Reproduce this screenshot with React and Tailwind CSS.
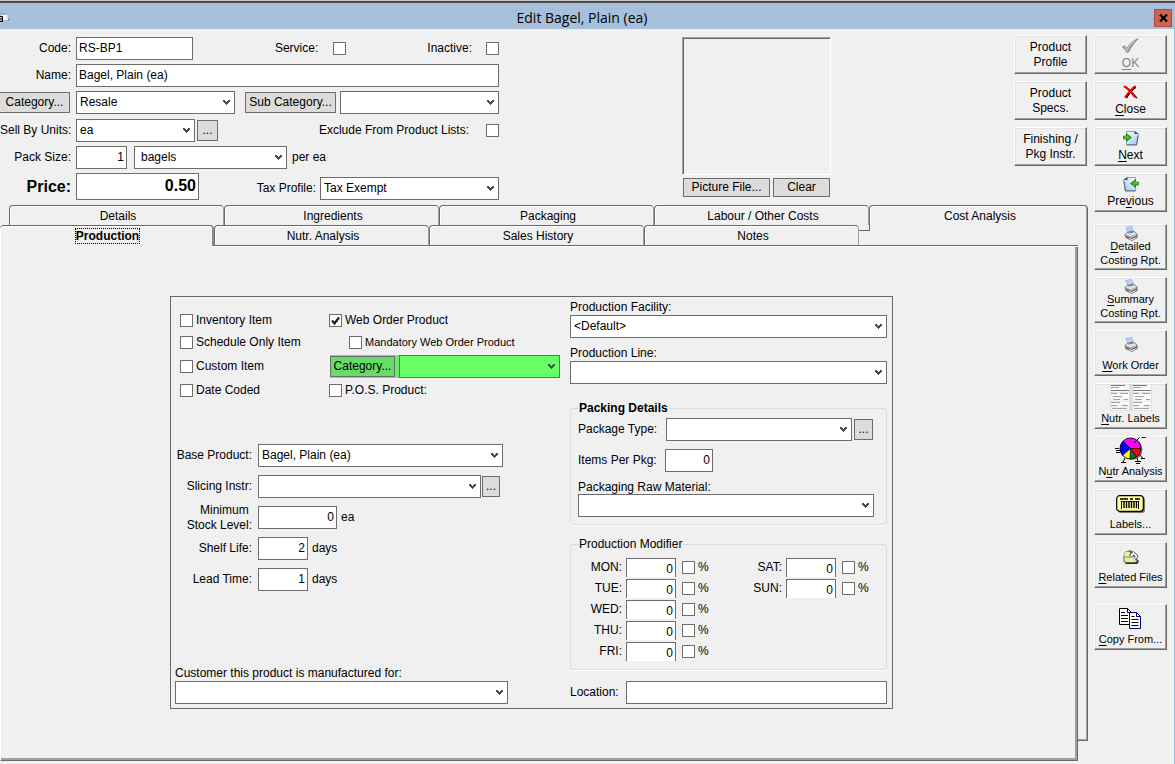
import { useState } from "react";
import { clsx } from "clsx";

const DAYS_LEFT = ["MON", "TUE", "WED", "THU", "FRI"];
const DAYS_RIGHT = ["SAT", "SUN"];

const BACK_TABS = [
	"Details",
	"Ingredients",
	"Packaging",
	"Labour / Other Costs",
];
const FRONT_TABS = ["Nutr. Analysis", "Sales History", "Notes"];

const TextField = ({ className, ...props }) => (
	<input
		type="text"
		className={clsx(
			"border border-[#6d6d6d] bg-white outline-none",
			className,
		)}
		{...props}
	/>
);

const SelectField = ({ className, selectClass, value = "", ...props }) => (
	<div className={clsx("relative h-[23px]", className)}>
		<select
			className={clsx(
				"block h-full w-full appearance-none border border-[#6d6d6d] pr-4 outline-none",
				selectClass || "bg-white pl-[3px]",
			)}
			defaultValue={value}
			{...props}
		>
			<option>{value}</option>
		</select>
		<svg
			className="pointer-events-none absolute top-[9px] right-1 h-[6px] w-2"
			viewBox="0 0 8 6"
		>
			<path
				d="M0 0h2v1h1v1h1V1h1V0h2v2H6v1H5v1H4v1H3V4H2V3H1V2H0z"
				fill="#4c4c4c"
			/>
		</svg>
	</div>
);

const CheckBox = ({ defaultChecked, ...props }) => (
	<span className="relative block size-[13px] shrink-0">
		<input
			type="checkbox"
			defaultChecked={defaultChecked}
			className="peer block size-[13px] appearance-none border border-[#6d6d6d] bg-white"
			{...props}
		/>
		<svg
			className="pointer-events-none absolute inset-0 hidden size-[13px] peer-checked:block"
			viewBox="0 0 13 13"
		>
			<path
				d="M3 6.5l2.5 3L10 3.5"
				fill="none"
				stroke="#1c1c1c"
				strokeWidth="2.2"
			/>
		</svg>
	</span>
);

const CheckRow = ({ label, className, checked }) => (
	<label className={clsx("flex items-center gap-[3px]", className)}>
		<CheckBox defaultChecked={checked} />
		{label}
	</label>
);

const FlatButton = ({ className, ...props }) => (
	<button
		type="button"
		className={clsx(
			"shrink-0 border border-[#6d6d6d] text-center whitespace-nowrap",
			className,
		)}
		{...props}
	/>
);

const RaisedButton = ({ className, ...props }) => (
	<button
		type="button"
		className={clsx(
			"flex w-[73px] shrink-0 flex-col items-center border border-t-white border-r-[#696969] border-b-[#696969] border-l-white bg-[#f0f0f0] shadow-[inset_-1px_-1px_0_#a0a0a0,inset_1px_1px_0_#e3e3e3]",
			className,
		)}
		{...props}
	/>
);

// "&" marks the underlined access key
const Mnemonic = ({ text }) => {
	const at = text.indexOf("&");
	if (at < 0) return text;
	return (
		<>
			{text.slice(0, at)}
			<span className="underline underline-offset-2">{text[at + 1]}</span>
			{text.slice(at + 2)}
		</>
	);
};

const CheckIcon = () => (
	<svg className="h-4 w-[17px]" viewBox="0 0 17 16">
		<path
			d="M1 8.500c1.500-1 3 0 3.800 2.200C7.500 6 11 2.500 16 .8 12.500 4.500 9 9 7 13.500c-.8 1.200-2 1.200-2.700.2C3.300 11.500 2.300 10 .8 9.800z"
			fill="#a2a2a2"
			stroke="#7a7a7a"
			strokeWidth=".7"
		/>
		<path
			d="M2 9.300c1.300-.3 2 1 3 3C7.500 7 10 4.500 13 2.800"
			fill="none"
			stroke="#d2d2d2"
			strokeWidth=".9"
		/>
	</svg>
);

const CrossIcon = () => (
	<svg className="h-[14px] w-[15px]" viewBox="0 0 15 14">
		<path
			d="M1.500 1.500C6 4.500 10 8.500 13 13M12 2C8.500 4.500 5 8.500 2.500 13"
			fill="none"
			stroke="#000"
			strokeWidth="1.400"
			transform="translate(.8 .2)"
		/>
		<path
			d="M1 1.200C5.500 4 9 8 12 12.200M12.500 1C8 4 5 8 2 12.500"
			fill="none"
			stroke="#f00"
			strokeWidth="2.100"
		/>
	</svg>
);

const PageIcon = ({ flip }) => (
	<svg className="h-4 w-4" viewBox="0 0 16 16">
		<defs>
			<linearGradient id={flip ? "pageB" : "pageA"} x1="0" y1="0" x2="1" y2="1">
				<stop offset="0" stopColor="#ffffff" />
				<stop offset="1" stopColor="#9cc4f2" />
			</linearGradient>
		</defs>
		<g transform={flip ? "matrix(-1 0 0 1 16 0)" : undefined}>
			<path
				d="M3.500 1.500h8l4 2.500-2 10.500h-10z"
				fill={flip ? "url(#pageB)" : "url(#pageA)"}
				stroke="#7f9fc6"
			/>
			<path d="M11.500.8l4 3.200h-4z" fill="#4d535c" />
			<path d="M3.500 15h10l1.500-9" fill="none" stroke="#5c6674" />
			<path
				d="M.5 6h3V3.500l5 4-5 4V9h-3z"
				fill="#3fae2a"
				stroke="#1f7d14"
				strokeWidth=".8"
			/>
			<path d="M1.500 7h3" stroke="#8fe07a" strokeWidth=".8" />
		</g>
	</svg>
);

const PrinterIcon = () => (
	<svg className="h-[15px] w-[14px] shrink-0" viewBox="0 0 15 16">
		<path d="M2 1.500L8 .5l2.500 6-6 1.500z" fill="#b5d2fa" stroke="#7fa4d6" strokeWidth=".7" />
		<path d="M1 9l3.500-2.500 6-1 3.500 3v4L8.500 15.500 2 12.500z" fill="#b0b0b0" stroke="#6a6a6a" strokeWidth=".9" />
		<path d="M1.500 9l3-2 6-1 3 2.500-6 2.500z" fill="#e2e2e2" />
		<path d="M4.500 7.500l5.500-1" stroke="#5a6e8e" />
		<path d="M2 11l6 2.500 6-3" fill="none" stroke="#4c4c4c" />
		<path d="M5.500 13.200l3 1.300 3.500-1.600" fill="none" stroke="#f5f5f5" strokeWidth=".9" />
	</svg>
);

const NutrLabelsIcon = () => (
	<svg className="h-[27px] w-[42px] shrink-0" viewBox="0 0 42 27">
		{[0, 22].map((x) => (
			<g key={x} transform={`translate(${x} 0)`}>
				<path d="M0 0h20v27H0z" fill="#fafafa" stroke="#c9c9c9" />
				<path d="M1 1.500h14M1 6.500h18" stroke="#7b7b7b" strokeWidth="1.200" />
				<path
					d="M1 3.500h8M1 9.500h6M10 9.500h8M3 12.500h9M3 15.500h7M14 15.500h4M1 18.500h9M1 21.500h6M12 21.500h6M2 24.500h15"
					stroke="#a2a2a2"
				/>
				<path d="M1 8.500h18M1 17.200h18M1 23h18" stroke="#d5d5d5" strokeWidth=".6" />
			</g>
		))}
	</svg>
);

const PieIcon = () => (
	<svg className="h-7 w-8 shrink-0" viewBox="0 0 32 28">
		<circle cx="17" cy="12.500" r="10.500" fill="#777" />
		<circle cx="15.500" cy="11.500" r="10.500" fill="#ff00ff" />
		<path d="M15.500 11.500L8 4a10.500 10.500 0 0 0-.5 14.500z" fill="#0000ff" />
		<path d="M15.500 11.500l-8 7a10.500 10.500 0 0 0 7.500 3.500z" fill="#ffff00" />
		<path d="M15.500 11.500L15 22a10.500 10.500 0 0 0 6.500-2z" fill="#008000" />
		<path d="M15.500 11.500l6 8.500a10.500 10.500 0 0 0 4.500-8.500z" fill="#ff0000" />
		<circle cx="15.500" cy="11.500" r="10.500" fill="none" stroke="#000" strokeWidth=".8" />
		<path
			d="M15.500 11.500L8 4M15.500 11.500l-8 7M15.500 11.500L15 22M15.500 11.500l6 8.500M15.500 11.500H26"
			stroke="#000"
			strokeWidth=".7"
		/>
		<path
			d="M0 11.500h4M1 13.500h4M1 15.500h4M19 6l5.500-5.500M26.500.5h4M10 21l-2 4M6 25.500h5M25 18l2.500 3M26 21.500h4M22 21l1 3M20 24.500h6M21 26.500h4"
			fill="none"
			stroke="#000"
		/>
	</svg>
);

const BarcodeIcon = () => (
	<svg className="h-[18px] w-[29px]" viewBox="0 0 29 18">
		<rect x="2" y="2" width="27" height="16" rx="3" fill="#777" />
		<rect x=".7" y=".7" width="26.600" height="15.600" rx="3" fill="#ffffa8" stroke="#000" strokeWidth="1.200" />
		<path d="M4 4h8M14 4h3M19 4h5" stroke="#000" strokeWidth="1.500" />
		<path d="M5.500 6v8M22.500 6v8" stroke="#000" />
		<path
			d="M8 6v7M10.500 6v7M13 6v7M15.500 6v7M18 6v7M20.500 6v7"
			stroke="#000"
			strokeWidth="1.400"
		/>
		<path d="M5 6.500h18" stroke="#000" strokeWidth=".8" />
	</svg>
);

const FolderIcon = () => (
	<svg className="h-[14px] w-4" viewBox="0 0 16 14">
		<path d="M2.500 3l3-2.500h3L10 3l3.500 2 1.500 8H2.500z" fill="#555" />
		<path d="M1 4l2-2.500h3.500L8 4h4v8H1z" fill="#f4f0a4" stroke="#77775a" strokeWidth=".7" />
		<path d="M7 4l3.500-2.500L15 6l-2 4-6-2z" fill="#fff" stroke="#333" strokeWidth=".8" />
		<path d="M9 6.500l2-2 2 2z" fill="#1c2fd0" />
		<path d="M.5 7h11l2.500 5.500H2z" fill="#eceaa4" stroke="#66664c" strokeWidth=".7" />
		<path d="M2.500 13.300h12l.8-3" fill="none" stroke="#000" />
	</svg>
);

const CopyIcon = () => (
	<svg className="h-[21px] w-[23px]" viewBox="0 0 23 21">
		<path d="M.5.5h8l4 4v12H.5z" fill="#fff" stroke="#000" />
		<path d="M8.500.5v4h4" fill="none" stroke="#000" />
		<path d="M2 4.500h4M2 7.500h7M2 10.500h7M2 13.500h7" stroke="#000" />
		<path d="M10.500 4.500h7l4 4v12h-11z" fill="#fff" stroke="#000080" />
		<path d="M17.500 4.500v4h4" fill="none" stroke="#000080" />
		<path d="M12.500 8.500h3M12.500 11.500h7M12.500 14.500h7M12.500 17.500h7" stroke="#000" />
	</svg>
);

const NAV_BUTTONS = [
	{ text: "&OK", icon: <CheckIcon />, disabled: true },
	{ text: "&Close", icon: <CrossIcon /> },
	{ text: "&Next", icon: <PageIcon /> },
	{ text: "Pre&vious", icon: <PageIcon flip /> },
];

const REPORT_BUTTONS = [
	{ text: "&Detailed", second: "Costing Rpt.", icon: <PrinterIcon /> },
	{ text: "&Summary", second: "Costing Rpt.", icon: <PrinterIcon /> },
	{ text: "&Work Order", icon: <PrinterIcon /> },
	{ text: "&Nutr. Labels", icon: <NutrLabelsIcon /> },
	{ text: "N&utr Analysis", icon: <PieIcon /> },
	{ text: "Labels...", icon: <BarcodeIcon /> },
	{ text: "&Related Files", icon: <FolderIcon /> },
];

const ReportButton = ({ text, second, icon }) => (
	<RaisedButton
		className={clsx(
			"h-[46px] text-[11px] leading-[14px] whitespace-nowrap",
			second ? "pt-px pb-[2px]" : "pb-[3px]",
		)}
	>
		<span
			className={clsx(
				"flex min-h-0 flex-1 justify-center",
				second ? "items-start" : "items-center",
			)}
		>
			{icon}
		</span>
		<span>
			<Mnemonic text={text} />
		</span>
		{second && <span>{second}</span>}
	</RaisedButton>
);

const TitleBar = () => (
	<header className="border-t border-[#c8c8c8]">
		<div className="flex h-[28px] items-center border-t-2 border-[#4a4a4a] bg-[#a6c0dc] pt-[3px] pr-[3px]">
			<svg className="h-3 w-[10px] shrink-0" viewBox="0 0 10 12">
				<path d="M0 1.500h6" stroke="#00e5ff" />
				<path d="M1 3h6l1 5H2z" fill="#f4f4f4" />
				<path d="M0 4.500h2.500v5H0M0 7h2" fill="none" stroke="#000" />
				<path d="M8 6l2 1.500L8 9z" fill="#808080" />
			</svg>
			<h1 className="flex-1 text-center font-['Open_Sans',sans-serif] text-[14px] leading-5">
				Edit Bagel, Plain (ea)
			</h1>
			<button
				type="button"
				aria-label="Close window"
				className="flex size-[18px] items-center justify-center border border-[#b4483a] bg-[#cd6352]"
			>
				<svg className="h-2 w-[9px]" viewBox="0 0 9 8">
					<path d="M1 .5l7 7M8 .5l-7 7" stroke="#000" strokeWidth="2.200" />
				</svg>
			</button>
		</div>
	</header>
);

const FieldLabel = ({ className, ...props }) => (
	<label
		className={clsx("shrink-0 text-right whitespace-nowrap", className)}
		{...props}
	/>
);

const ProductForm = () => (
	<form className="flex w-[499px] shrink-0 flex-col gap-[5px] pt-2">
		<div className="flex flex-col gap-1">
			<div className="flex items-center">
				<FieldLabel htmlFor="code" className="w-[71px]">
					Code:
				</FieldLabel>
				<TextField
					id="code"
					defaultValue="RS-BP1"
					className="ml-[5px] h-[23px] w-[117px] px-[2px] pb-[2px]"
				/>
				<label className="ml-auto flex items-center gap-[15px]">
					Service:
					<CheckBox />
				</label>
				<label className="ml-[81px] flex items-center gap-[14px]">
					Inactive:
					<CheckBox />
				</label>
			</div>
			<div className="flex items-center">
				<FieldLabel htmlFor="name" className="w-[71px]">
					Name:
				</FieldLabel>
				<TextField
					id="name"
					defaultValue="Bagel, Plain (ea)"
					className="ml-[5px] h-[23px] min-w-0 flex-1 px-[2px] pb-[2px]"
				/>
			</div>
			<div className="flex items-center">
				<FlatButton className="h-[21px] w-[70px] border-l-0 bg-[#dcdcdc]">
					Category...
				</FlatButton>
				<SelectField
					aria-label="Category"
					value="Resale"
					className="ml-[6px] w-[159px]"
				/>
				<FlatButton className="ml-auto h-[21px] w-[91px] bg-[#dcdcdc]">
					Sub Category...
				</FlatButton>
				<SelectField aria-label="Sub category" className="ml-1 w-[159px]" />
			</div>
		</div>
		<div className="flex flex-col gap-1">
			<div className="flex items-center">
				<FieldLabel htmlFor="units" className="w-[71px]">
					Sell By Units:
				</FieldLabel>
				<SelectField id="units" value="ea" className="ml-[5px] w-[119px]" />
				<FlatButton className="ml-[2px] size-[21px] bg-[#dcdcdc]">
					...
				</FlatButton>
				<label className="ml-auto flex items-center gap-[17px]">
					Exclude From Product Lists:
					<CheckBox />
				</label>
			</div>
			<div className="flex items-center">
				<FieldLabel htmlFor="pack" className="w-[71px]">
					Pack Size:
				</FieldLabel>
				<TextField
					id="pack"
					defaultValue="1"
					className="ml-[5px] h-[23px] w-[51px] px-[2px] pb-[2px] text-right"
				/>
				<SelectField
					aria-label="Pack unit"
					value="bagels"
					className="ml-[7px] w-[153px]"
					selectClass="bg-white pl-[6px]"
				/>
				<span className="ml-[5px]">per ea</span>
			</div>
			<div className="flex items-end">
				<FieldLabel
					htmlFor="price"
					className="w-[71px] self-center text-[16px] font-bold"
				>
					Price:
				</FieldLabel>
				<TextField
					id="price"
					defaultValue="0.50"
					className="ml-[5px] h-[27px] w-[123px] px-[2px] pb-[2px] text-right text-[16px] font-bold"
				/>
				<FieldLabel htmlFor="tax" className="ml-auto leading-[23px]">
					Tax Profile:
				</FieldLabel>
				<SelectField
					id="tax"
					value="Tax Exempt"
					className="ml-1 w-[179px]"
				/>
			</div>
		</div>
	</form>
);

const PictureBox = () => (
	<div className="w-[149px] shrink-0 pt-2">
		<div className="h-[138px] border border-t-[#a0a0a0] border-r-white border-b-white border-l-[#a0a0a0] shadow-[inset_1px_1px_0_#696969]" />
		<div className="mt-[3px] flex gap-[3px] pl-px">
			<FlatButton className="h-[19px] w-[87px] bg-[#dcdcdc]">
				Picture File...
			</FlatButton>
			<FlatButton className="h-[19px] w-[57px] bg-[#dcdcdc]">Clear</FlatButton>
		</div>
	</div>
);

const Tab = ({ className, ...props }) => (
	<button
		type="button"
		role="tab"
		className={clsx(
			"rounded-t-[4px] border-t border-l border-[#696969] pt-px pl-[3px] text-center",
			className,
		)}
		{...props}
	/>
);

const DayRow = ({ day }) => (
	<div className="flex h-[19px] items-center">
		<FieldLabel htmlFor={day} className="w-[44px]">
			{day}:
		</FieldLabel>
		<TextField
			id={day}
			defaultValue="0"
			className="mr-[6px] ml-1 h-[19px] w-[50px] border-b-0 px-[2px] pt-[2px] text-right"
		/>
		<CheckRow label="%" />
	</div>
);

const ProductionPanel = () => (
	<div className="ml-[169px] flex w-[723px] justify-between border border-[#696969] pr-[5px] pb-1 pl-1">
		<div className="flex w-[385px] flex-col pt-[13px]">
			<div className="grid grid-cols-[149px_1fr] grid-rows-[20px_21px_23px_21px] gap-y-[2px] pl-[5px]">
				<CheckRow label="Inventory Item" />
				<CheckRow label="Web Order Product" checked />
				<CheckRow label="Schedule Only Item" />
				<CheckRow
					label="Mandatory Web Order Product"
					className="pl-5 text-[11px]"
				/>
				<CheckRow label="Custom Item" />
				<div className="ml-px flex items-center bg-[#66ee66]">
					<FlatButton className="h-[21px] w-[65px] bg-[#66dd66]">
						Category...
					</FlatButton>
					<SelectField
						aria-label="Web category"
						className="ml-1 flex-1"
						selectClass="bg-[#66ff66] pl-[3px]"
					/>
				</div>
				<CheckRow label="Date Coded" />
				<CheckRow label="P.O.S. Product:" />
			</div>

			<div className="mt-[43px] flex flex-col gap-2">
				<div className="flex items-center">
					<FieldLabel htmlFor="base" className="w-[77px]">
						Base Product:
					</FieldLabel>
					<SelectField
						id="base"
						value="Bagel, Plain (ea)"
						className="ml-[6px] w-[245px]"
					/>
				</div>
				<div className="flex items-center">
					<FieldLabel htmlFor="slicing" className="w-[77px]">
						Slicing Instr:
					</FieldLabel>
					<SelectField id="slicing" className="ml-[6px] w-[223px]" />
					<FlatButton className="ml-px h-[21px] w-[18px] bg-[#dcdcdc]">
						...
					</FlatButton>
				</div>
				<div className="flex h-[23px] items-center">
					<FieldLabel htmlFor="stock" className="w-[77px]">
						Minimum&nbsp;
						<br />
						Stock Level:
					</FieldLabel>
					<TextField
						id="stock"
						defaultValue="0"
						className="mr-1 ml-[6px] h-[23px] w-[79px] px-[2px] pb-[2px] text-right"
					/>
					ea
				</div>
				<div className="flex items-center">
					<FieldLabel htmlFor="shelf" className="w-[77px]">
						Shelf Life:
					</FieldLabel>
					<TextField
						id="shelf"
						defaultValue="2"
						className="mr-1 ml-[6px] h-[23px] w-[50px] px-[2px] pb-[2px] text-right"
					/>
					days
				</div>
				<div className="flex items-center">
					<FieldLabel htmlFor="lead" className="w-[77px]">
						Lead Time:
					</FieldLabel>
					<TextField
						id="lead"
						defaultValue="1"
						className="mr-1 ml-[6px] h-[23px] w-[50px] px-[2px] pb-[2px] text-right"
					/>
					days
				</div>
			</div>

			<div className="mt-auto w-[333px]">
				<label htmlFor="customer" className="block leading-4">
					Customer this product is manufactured for:
				</label>
				<SelectField id="customer" />
			</div>
		</div>

		<div className="w-[317px] pt-[2px]">
			<label htmlFor="facility" className="block leading-4">
				Production Facility:
			</label>
			<SelectField id="facility" value="<Default>" />
			<label htmlFor="line" className="mt-[7px] block leading-4">
				Production Line:
			</label>
			<SelectField id="line" />

			<fieldset className="mt-4 rounded-[3px] border border-[#d5dfe5] px-[7px] pb-[7px] shadow-[0_1px_0_#fff]">
				<legend className="px-px leading-4 font-bold">Packing Details</legend>
				<div className="mt-[2px] flex items-center">
					<label htmlFor="packageType" className="w-[88px]">
						Package Type:
					</label>
					<SelectField id="packageType" className="w-[186px]" />
					<FlatButton className="ml-[2px] h-[21px] w-[19px] bg-[#dcdcdc]">
						...
					</FlatButton>
				</div>
				<div className="mt-2 flex items-center">
					<label htmlFor="items" className="w-[87px]">
						Items Per Pkg:
					</label>
					<TextField
						id="items"
						defaultValue="0"
						className="h-[23px] w-[48px] px-[2px] pb-[2px] text-right"
					/>
				</div>
				<label htmlFor="raw" className="mt-2 block leading-[14px]">
					Packaging Raw Material:
				</label>
				<SelectField id="raw" className="w-[296px]" />
			</fieldset>

			<fieldset className="mt-[11px] rounded-[3px] border border-[#d5dfe5] px-[7px] pb-2 shadow-[0_1px_0_#fff]">
				<legend className="px-px leading-4">Production Modifier</legend>
				<div className="mt-[6px] flex gap-[30px]">
					<div className="flex w-[130px] flex-col gap-[2px]">
						{DAYS_LEFT.map((day) => (
							<DayRow key={day} day={day} />
						))}
					</div>
					<div className="flex flex-col gap-[2px]">
						{DAYS_RIGHT.map((day) => (
							<DayRow key={day} day={day} />
						))}
					</div>
				</div>
			</fieldset>

			<div className="mt-[11px] flex items-center">
				<label htmlFor="location" className="w-[56px]">
					Location:
				</label>
				<TextField id="location" className="h-[23px] min-w-0 flex-1 px-[2px]" />
			</div>
		</div>
	</div>
);

const App = () => {
	const [active, setActive] = useState("Production");

	return (
		<div className="min-h-screen bg-[#f0f0f0] font-['Liberation_Sans',Arial,sans-serif] text-[12px] leading-[15px] text-black">
			<TitleBar />
			<div className="flex border-r border-[#a6c0dc] pr-[7px] pb-[3px]">
				<main className="min-w-0 flex-1">
					<div className="flex h-[176px] justify-between pr-px">
						<ProductForm />
						<PictureBox />
						<div className="flex flex-col gap-[7px] pt-[6px]">
							{[
								["Product", "Profile"],
								["Product", "Specs."],
								["Finishing /", "Pkg Instr."],
							].map(([first, second]) => (
								<RaisedButton
									key={second}
									className="h-[39px] justify-center"
								>
									<span>{first}</span>
									<span>{second}</span>
								</RaisedButton>
							))}
						</div>
					</div>

					<div role="tablist" className="flex h-5 pl-[9px]">
						{BACK_TABS.map((tab) => (
							<Tab
								key={tab}
								onClick={() => setActive(tab)}
								className="w-[215px] border-r border-r-[#a0a0a0] shadow-[inset_1px_1px_0_#fff]"
							>
								{tab}
							</Tab>
						))}
						<Tab
							onClick={() => setActive("Cost Analysis")}
							className="flex-1 border-r shadow-[inset_1px_1px_0_#fff,inset_-1px_0_0_#a0a0a0]"
						>
							Cost Analysis
						</Tab>
					</div>

					<div className="flex items-start">
						<div className="min-w-0 flex-1">
							<div role="tablist" className="flex h-[21px]">
								<Tab
									aria-selected={active === "Production"}
									onClick={() => setActive("Production")}
									className="w-[214px] border-r-2 border-l-0 border-r-[#8c8c8c] font-bold shadow-[inset_1px_1px_0_#fff]"
								>
									<span className="outline outline-dotted outline-black">
										Production
									</span>
								</Tab>
								{FRONT_TABS.map((tab) => (
									<Tab
										key={tab}
										onClick={() => setActive(tab)}
										className="w-[215px] border-r border-b border-r-[#a0a0a0] shadow-[inset_1px_1px_0_#fff,0_1px_0_#fff]"
									>
										{tab}
									</Tab>
								))}
								<div className="flex-1 border-b border-[#696969] shadow-[0_1px_0_#fff]">
									<div className="h-[6px] w-[11px] border-r border-b border-[#696969]" />
								</div>
							</div>
							<div className="border-r border-b border-l border-[#696969] border-l-white pt-[50px] pb-[51px] shadow-[inset_-2px_-2px_0_#a0a0a0]">
								<ProductionPanel />
							</div>
						</div>
						{/* edge of the tab page that lies behind */}
						<div className="mb-5 w-[10px] self-stretch border-r border-b border-[#696969] shadow-[inset_-1px_-1px_0_#a0a0a0]" />
					</div>
				</main>

				<aside className="ml-[6px] flex shrink-0 flex-col pt-[6px]">
					<div className="flex flex-col gap-[7px]">
						{NAV_BUTTONS.map(({ text, icon, disabled }) => (
							<RaisedButton
								key={text}
								disabled={disabled}
								className={clsx(
									"h-[39px] pb-[2px]",
									disabled && "text-[#838383]",
								)}
							>
								<span className="flex min-h-0 flex-1 items-center">
									{icon}
								</span>
								<span>
									<Mnemonic text={text} />
								</span>
							</RaisedButton>
						))}
					</div>
					<div className="mt-3 mb-4 flex flex-col gap-[7px]">
						{REPORT_BUTTONS.map((button) => (
							<ReportButton key={button.text} {...button} />
						))}
					</div>
					<ReportButton text="&Copy From..." icon={<CopyIcon />} />
				</aside>
			</div>
		</div>
	);
};

export default App;
